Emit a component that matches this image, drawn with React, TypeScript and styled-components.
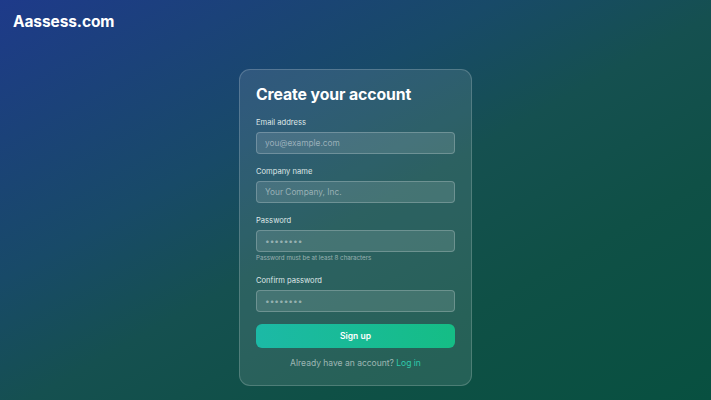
import styled, { createGlobalStyle } from 'styled-components';

const GlobalStyle = createGlobalStyle`
    html, body {
        margin: 0;
        padding: 0;
        height: 100%;
    }
    body {
        font-family: Inter, "Noto Sans", sans-serif;
    }
    * {
        box-sizing: border-box;
    }
`;

const Page = styled.div`
    width: 100%;
    min-height: 100vh;
    background: linear-gradient(to bottom right, #1e3a8a 0%, #184a68 35%, #155050 52%, #0f5046 72%, #085040 100%);
    display: flex;
    flex-direction: column;
`;

const Header = styled.header`
    padding: 12px 13px 0;
    height: 69px;
`;

const Brand = styled.h1`
    margin: 0;
    color: #ffffff;
    font-size: 15.5px;
    font-weight: 700;
    line-height: 20px;
    letter-spacing: -0.1px;
`;

const Main = styled.main`
    display: flex;
    justify-content: center;
`;

const Card = styled.form`
    width: 233px;
    padding: 14px 16px 16px 16px;
    border-radius: 11px;
    background: rgba(255, 255, 255, 0.1);
    border: 1px solid rgba(255, 255, 255, 0.18);
    display: flex;
    flex-direction: column;
`;

const Title = styled.h2`
    margin: 0 0 12px;
    color: #ffffff;
    font-size: 15.8px;
    font-weight: 700;
    line-height: 22px;
    letter-spacing: -0.1px;
`;

const Field = styled.div<{ last?: boolean }>`
    display: flex;
    flex-direction: column;
    margin-bottom: ${props => props.last ? '12px' : '13px'};
`;

const Label = styled.label`
    color: #dfe7e7;
    font-size: 7.6px;
    font-weight: 400;
    line-height: 10px;
    margin-bottom: 4px;
`;

const Input = styled.input`
    width: 199px;
    height: 22px;
    padding: 0 8px;
    border-radius: 4px;
    border: 1px solid rgba(255, 255, 255, 0.22);
    background: rgba(255, 255, 255, 0.12);
    color: #ffffff;
    font-family: Inter, "Noto Sans", sans-serif;
    font-size: 8.3px;
    outline: none;

    &::placeholder {
        color: rgba(255, 255, 255, 0.45);
    }
`;

const Hint = styled.p`
    margin: 2px 0 1px;
    color: rgba(255, 255, 255, 0.5);
    font-size: 6.2px;
    line-height: 8px;
`;

const Button = styled.button`
    width: 199px;
    height: 24px;
    border: none;
    border-radius: 6px;
    background: linear-gradient(90deg, #1cb9a6 0%, #15bd85 100%);
    color: #ffffff;
    font-family: Inter, "Noto Sans", sans-serif;
    font-size: 8.5px;
    font-weight: 600;
    cursor: pointer;
`;

const Footer = styled.p`
    margin: 9px 0 0;
    text-align: center;
    color: rgba(255, 255, 255, 0.55);
    font-size: 8.5px;
    line-height: 12px;
`;

const LoginLink = styled.a`
    color: #2fc9ad;
    text-decoration: none;
`;

const fields = [
    { label: 'Email address', type: 'email', placeholder: 'you@example.com' },
    { label: 'Company name', type: 'text', placeholder: 'Your Company, Inc.' },
    { label: 'Password', type: 'password', placeholder: '••••••••', hint: 'Password must be at least 8 characters' },
    { label: 'Confirm password', type: 'password', placeholder: '••••••••' },
];

const App = () => {
    return (
        <>
            <GlobalStyle />
            <Page>
                <Header>
                    <Brand>Aassess.com</Brand>
                </Header>
                <Main>
                    <Card onSubmit={e => e.preventDefault()}>
                        <Title>Create your account</Title>
                        {fields.map((f, i) => (
                            <Field key={f.label} last={i === fields.length - 1}>
                                <Label>{f.label}</Label>
                                <Input type={f.type} placeholder={f.placeholder} />
                                {f.hint && <Hint>{f.hint}</Hint>}
                            </Field>
                        ))}
                        <Button type="submit">Sign up</Button>
                        <Footer>
                            Already have an account? <LoginLink href="#">Log in</LoginLink>
                        </Footer>
                    </Card>
                </Main>
            </Page>
        </>
    );
};

export default App;
